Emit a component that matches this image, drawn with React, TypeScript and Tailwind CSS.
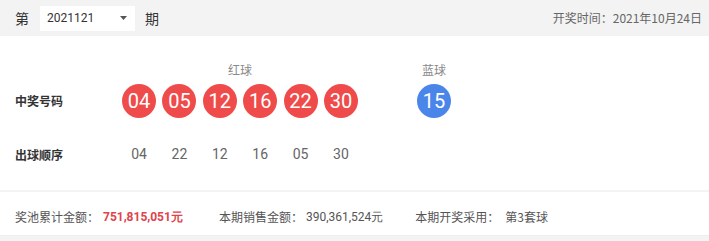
const reds = ['04', '05', '12', '16', '22', '30']
const order = ['04', '22', '12', '16', '05', '30']

export default function App() {
  return (
    <div className="w-[709px] h-[241px] bg-[#f3f3f3] text-[#333] font-['Noto_Sans_CJK_SC','Noto_Sans',sans-serif]">
      {/* header */}
      <div className="h-[36px] flex items-center pl-[15px] pr-[7px]">
        <span className="text-[14px]">第</span>
        <div className="ml-[11px] w-[95px] h-[25px] bg-white flex items-center pl-[7px] pr-[8px] justify-between">
          <span className="text-[12px] font-['Roboto',sans-serif]">2021121</span>
          <svg width="7" height="4" viewBox="0 0 7 4">
            <path d="M0 0h7L3.5 4z" fill="#555" />
          </svg>
        </div>
        <span className="ml-[10px] text-[14px]">期</span>
        <span className="ml-auto text-[12px] text-[#666]">开奖时间：2021年10月24日</span>
      </div>

      {/* numbers */}
      <div className="bg-white h-[154px] flex flex-col pl-[15px] pt-[26px]">
        <div className="flex">
          <div className="w-[107px]" />
          <div className="w-[236px] text-center text-[12px] text-[#888] leading-[16px]">红球</div>
          <div className="ml-[59px] w-[34px] text-center text-[12px] text-[#888] leading-[16px]">蓝球</div>
        </div>
        <div className="flex items-center mt-[6px]">
          <div className="w-[107px] text-[12px] font-bold">中奖号码</div>
          <div className="flex gap-[6.4px]">
            {reds.map((n) => (
              <div
                key={n}
                className="w-[34px] h-[34px] rounded-full bg-[#ef4b4b] text-white flex items-center justify-center text-[20px] font-['Roboto',sans-serif]"
              >
                {n}
              </div>
            ))}
          </div>
          <div className="ml-[59px] w-[34px] h-[34px] rounded-full bg-[#4a86ea] text-white flex items-center justify-center text-[20px] font-['Roboto',sans-serif]">
            15
          </div>
        </div>
        <div className="flex items-center mt-[26px]">
          <div className="w-[107px] text-[12px] font-bold">出球顺序</div>
          <div className="flex gap-[6.4px]">
            {order.map((n, i) => (
              <div key={i} className="w-[34px] text-center text-[14px] text-[#666] font-['Roboto',sans-serif]">
                {n}
              </div>
            ))}
          </div>
        </div>
      </div>

      {/* footer */}
      <div className="mt-[2px] bg-white h-[44px] flex items-center pl-[15px] pt-[6px] text-[12px] text-[#555] border-b border-[#eee]">
        <span>奖池累计金额：</span>
        <span className="ml-[4px] text-[#e0434b] font-bold font-['Roboto',sans-serif]">751,815,051元</span>
        <span className="ml-[36px]">本期销售金额：</span>
        <span className="ml-[3px] font-['Roboto',sans-serif]">390,361,524元</span>
        <span className="ml-[32px]">本期开奖采用：</span>
        <span className="ml-[6px]">第3套球</span>
      </div>
    </div>
  )
}
